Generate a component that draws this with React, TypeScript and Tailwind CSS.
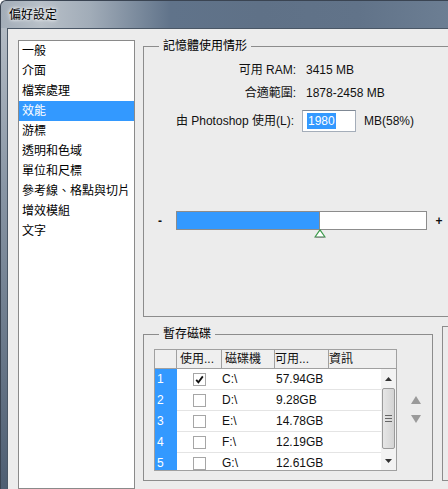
import React from 'react'

const font = "font-['Liberation_Sans','Noto_Sans_CJK_TC',sans-serif]"

const sections = ['一般', '介面', '檔案處理', '效能', '游標', '透明和色域', '單位和尺標', '參考線、格點與切片', '增效模組', '文字']

const disks = [
  { n: '1', on: true, drive: 'C:\\', free: '57.94GB' },
  { n: '2', on: false, drive: 'D:\\', free: '9.28GB' },
  { n: '3', on: false, drive: 'E:\\', free: '14.78GB' },
  { n: '4', on: false, drive: 'F:\\', free: '12.19GB' },
  { n: '5', on: false, drive: 'G:\\', free: '12.61GB' },
]

function CheckBox({ on }: { on: boolean }) {
  return (
    <div className="h-[13px] w-[13px] border border-[#a6a6a6] bg-white">
      {on ? (
        <svg viewBox="0 0 11 11" className="h-[11px] w-[11px]">
          <path d="M2.2 5.8 L4.4 8.4 L8.8 2.4" fill="none" stroke="#111" strokeWidth="1.8" />
        </svg>
      ) : null}
    </div>
  )
}

export default function App() {
  return (
    <div className={`${font} flex h-[489px] w-[448px] flex-col overflow-hidden text-[12px] text-[#111]`}>
      <div className="flex h-[28px] shrink-0 items-center rounded-tl-[6px] border-l border-t border-[#3a4452] bg-[linear-gradient(90deg,#a3adb8_0%,#b8c0c8_9%,#a1acb8_20%,#60738a_38%,#5f7187_58%,#617389_80%,#6c7e93_100%)] pl-[8px]">
        <span className="text-black [text-shadow:0_0_5px_#fff,0_0_3px_#fff]">偏好設定</span>
      </div>

      <div className="flex min-h-0 flex-1">
        <div className="w-[7px] shrink-0 border-l border-[#3a4452] bg-[linear-gradient(180deg,#b3bbc4_0%,#8895a4_35%,#4e5e72_100%)]" />

        <div className="flex min-w-0 flex-1 overflow-hidden border-l border-t border-[#4a5766] bg-[#ececec] pl-[10px] pt-[11px]">
          <div className="w-[117px] shrink-0 border border-[#8a8a8a] bg-white">
            {sections.map((s) => (
              <div
                key={s}
                className={`h-[20px] pl-[3px] leading-[20px] ${s === '效能' ? 'bg-[#3399ff] text-white' : 'text-black'}`}
              >
                {s}
              </div>
            ))}
          </div>

          <div className="ml-[8px] flex shrink-0 flex-col">
            <fieldset className="-mt-[2px] h-[279px] w-[420px] shrink-0 border border-[#8c8c8c]">
              <legend className="ml-[15px] px-[4px] leading-[16px] text-black">記憶體使用情形</legend>

              <div className="mt-[8px] flex h-[16px] items-center">
                <span className="w-[152px] text-right">可用 RAM:</span>
                <span className="ml-[10px]">3415 MB</span>
              </div>
              <div className="mt-[7px] flex h-[16px] items-center">
                <span className="w-[152px] text-right">合適範圍:</span>
                <span className="ml-[10px]">1878-2458 MB</span>
              </div>
              <div className="mt-[9px] flex h-[22px] items-center">
                <span className="w-[150px] text-right">由 Photoshop 使用(L):</span>
                <div className="ml-[8px] flex h-[22px] w-[54px] items-center border border-[#a4adb9] border-t-[#7f8894] bg-white pl-[4px]">
                  <span className="bg-[#3399ff] px-[1px] leading-[16px] text-white">1980</span>
                </div>
                <span className="ml-[8px]">MB(58%)</span>
              </div>

              <div className="mt-[79px] flex h-[19px] items-center">
                <span className="w-[32px] text-center font-bold">-</span>
                <div className="relative h-[19px] w-[251px] border border-[#8c8c8c] bg-white">
                  <div className="h-full w-[143px] border-r border-[#8c8c8c] bg-[#3399ff]" />
                  <svg viewBox="0 0 12 9" className="absolute left-[137px] top-[17px] h-[9px] w-[12px]">
                    <path d="M6 0.8 L11 8 L1 8 Z" fill="#fff" stroke="#3a9a4a" strokeWidth="1.2" />
                    <path d="M1.5 8.3 L10.5 8.3" stroke="#888" strokeWidth="1" />
                  </svg>
                </div>
                <span className="w-[24px] text-center font-bold">+</span>
              </div>
            </fieldset>

            <div className="mt-[9px] flex shrink-0">
              <fieldset className="h-[155px] w-[290px] shrink-0 border border-[#8c8c8c]">
                <legend className="ml-[15px] px-[4px] leading-[16px] text-black">暫存磁碟</legend>

                <div className="ml-[10px] mt-[7px] flex">
                  <div className="w-[243px] border border-[#a0a0a0]">
                    <div className="flex h-[19px] items-center border-b border-[#a0a0a0] bg-[#efefef] leading-[18px]">
                      <div className="h-full w-[22px] border-r border-[#a0a0a0]" />
                      <div className="h-full w-[45px] border-r border-[#a0a0a0] pl-[3px]">使用...</div>
                      <div className="h-full w-[53px] border-r border-[#a0a0a0] pl-[3px]">磁碟機</div>
                      <div className="h-full w-[54px] border-r border-[#a0a0a0]">可用...</div>
                      <div className="h-full flex-1">資訊</div>
                    </div>

                    <div className="flex h-[101px] overflow-hidden bg-white">
                      <div className="w-[22px] shrink-0 bg-[#3399ff] text-white">
                        {disks.map((d) => (
                          <div key={d.n} className="h-[21px] pl-[2px] leading-[21px]">
                            {d.n}
                          </div>
                        ))}
                      </div>
                      <div className="w-[204px] shrink-0">
                        {disks.map((d) => (
                          <div key={d.n} className="flex h-[21px] items-center border-b border-[#e4e4e4]">
                            <div className="flex w-[45px] justify-center">
                              <CheckBox on={d.on} />
                            </div>
                            <div className="w-[54px]">{d.drive}</div>
                            <div>{d.free}</div>
                          </div>
                        ))}
                      </div>
                      <div className="flex w-[15px] shrink-0 flex-col items-center bg-[#f3f3f3]">
                        <div className="flex h-[19px] items-center">
                          <svg viewBox="0 0 7 4" className="h-[4px] w-[7px]">
                            <path d="M3.5 0 L7 4 L0 4 Z" fill="#333" />
                          </svg>
                        </div>
                        <div className="flex h-[61px] w-[13px] flex-col items-center justify-center gap-[2px] rounded-[2px] border border-[#9a9a9a] bg-[linear-gradient(90deg,#e6e6e6,#d4d4d4)]">
                          <div className="h-px w-[7px] bg-[#666]" />
                          <div className="h-px w-[7px] bg-[#666]" />
                          <div className="h-px w-[7px] bg-[#666]" />
                        </div>
                        <div className="flex flex-1 items-end pb-[7px]">
                          <svg viewBox="0 0 7 4" className="h-[4px] w-[7px]">
                            <path d="M0 0 L7 0 L3.5 4 Z" fill="#333" />
                          </svg>
                        </div>
                      </div>
                    </div>
                  </div>

                  <div className="ml-[12px] flex w-[14px] flex-col items-center pt-[47px]">
                    <svg viewBox="0 0 10 8" className="h-[8px] w-[10px] blur-[0.4px]">
                      <path d="M5 0 L10 8 L0 8 Z" fill="#9a9a9a" />
                    </svg>
                    <svg viewBox="0 0 10 8" className="mt-[11px] h-[8px] w-[10px] blur-[0.4px]">
                      <path d="M0 0 L10 0 L5 8 Z" fill="#9a9a9a" />
                    </svg>
                  </div>
                </div>
              </fieldset>

              <fieldset className="ml-[9px] h-[155px] w-[200px] shrink-0 border border-[#8c8c8c]" />
            </div>
          </div>
        </div>
      </div>
    </div>
  )
}
